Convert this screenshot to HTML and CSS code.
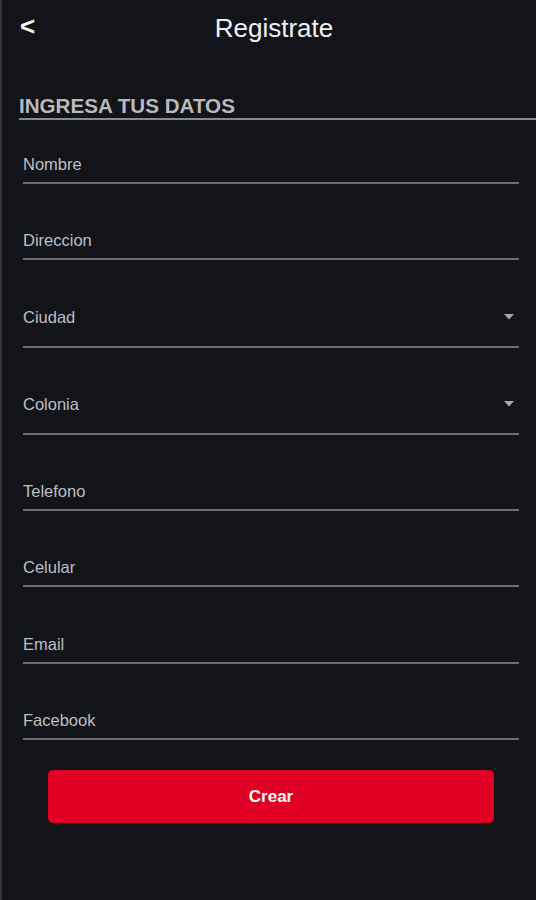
FILE: index.html
```html
<!DOCTYPE html>
<html lang="es">
<head>
<meta charset="utf-8">
<title>Registrate</title>
<link rel="stylesheet" href="styles.css">
</head>
<body>
<div class="screen">
  <header class="topbar">
    <span class="back">&lt;</span>
    <h1 class="title">Registrate</h1>
    <span class="spacer"></span>
  </header>
  <h2 class="section">INGRESA TUS DATOS</h2>
  <form class="form">
    <div class="field"><span class="label">Nombre</span></div>
    <div class="field"><span class="label">Direccion</span></div>
    <div class="field select"><span class="label">Ciudad</span>
      <svg class="caret" width="10" height="6" viewBox="0 0 10 6"><path d="M0 0 H10 L5 5.5 Z" fill="#a8a8ac"/></svg>
    </div>
    <div class="field select"><span class="label">Colonia</span>
      <svg class="caret" width="10" height="6" viewBox="0 0 10 6"><path d="M0 0 H10 L5 5.5 Z" fill="#a8a8ac"/></svg>
    </div>
    <div class="field"><span class="label">Telefono</span></div>
    <div class="field"><span class="label">Celular</span></div>
    <div class="field"><span class="label">Email</span></div>
    <div class="field"><span class="label">Facebook</span></div>
    <button type="button" class="btn">Crear</button>
  </form>
</div>
</body>
</html>
```
FILE: styles.css
```css
html, body {
  margin: 0;
  padding: 0;
  background: #131419;
}
body {
  font-family: "Liberation Sans", Arial, sans-serif;
}
.screen {
  min-height: 900px;
  border-left: 2px solid #35363b;
  box-sizing: border-box;
  background: #131419;
}
.topbar {
  display: grid;
  grid-template-columns: 1fr auto 1fr;
  align-items: center;
  padding: 13px 0 0 18px;
  line-height: 30px;
}
.back {
  color: #f4f4f4;
  font-size: 26px;
  font-weight: bold;
  line-height: 30px;
  margin-top: -5px;
}
.title {
  margin: 0;
  padding-right: 8px;
  color: #f2f2f2;
  font-size: 26px;
  font-weight: normal;
  line-height: 30px;
}
.section {
  margin: 51px 0 0 17px;
  color: #b9b9bd;
  font-size: 20.6px;
  font-weight: bold;
  line-height: 24px;
  border-bottom: 2px solid #8a8a8e;
}
.form {
  padding: 0 17px 0 21px;
  margin: 0;
}
.field {
  display: flex;
  align-items: center;
  justify-content: space-between;
  padding: 47.3px 0 9px;
  border-bottom: 2px solid #6c6d71;
}
.field:first-child {
  padding-top: 35px;
}
.field.select {
  padding-bottom: 20px;
}
.label {
  color: #bfbfc3;
  font-size: 16.5px;
  line-height: 18px;
}
.caret {
  margin-right: 5px;
}
.btn {
  display: block;
  width: calc(100% - 50px);
  height: 53px;
  margin: 30px 25px 0;
  border: none;
  border-radius: 5px;
  background: #e00024;
  color: #ffffff;
  font-family: "Liberation Sans", Arial, sans-serif;
  font-size: 17px;
  font-weight: bold;
}
```
